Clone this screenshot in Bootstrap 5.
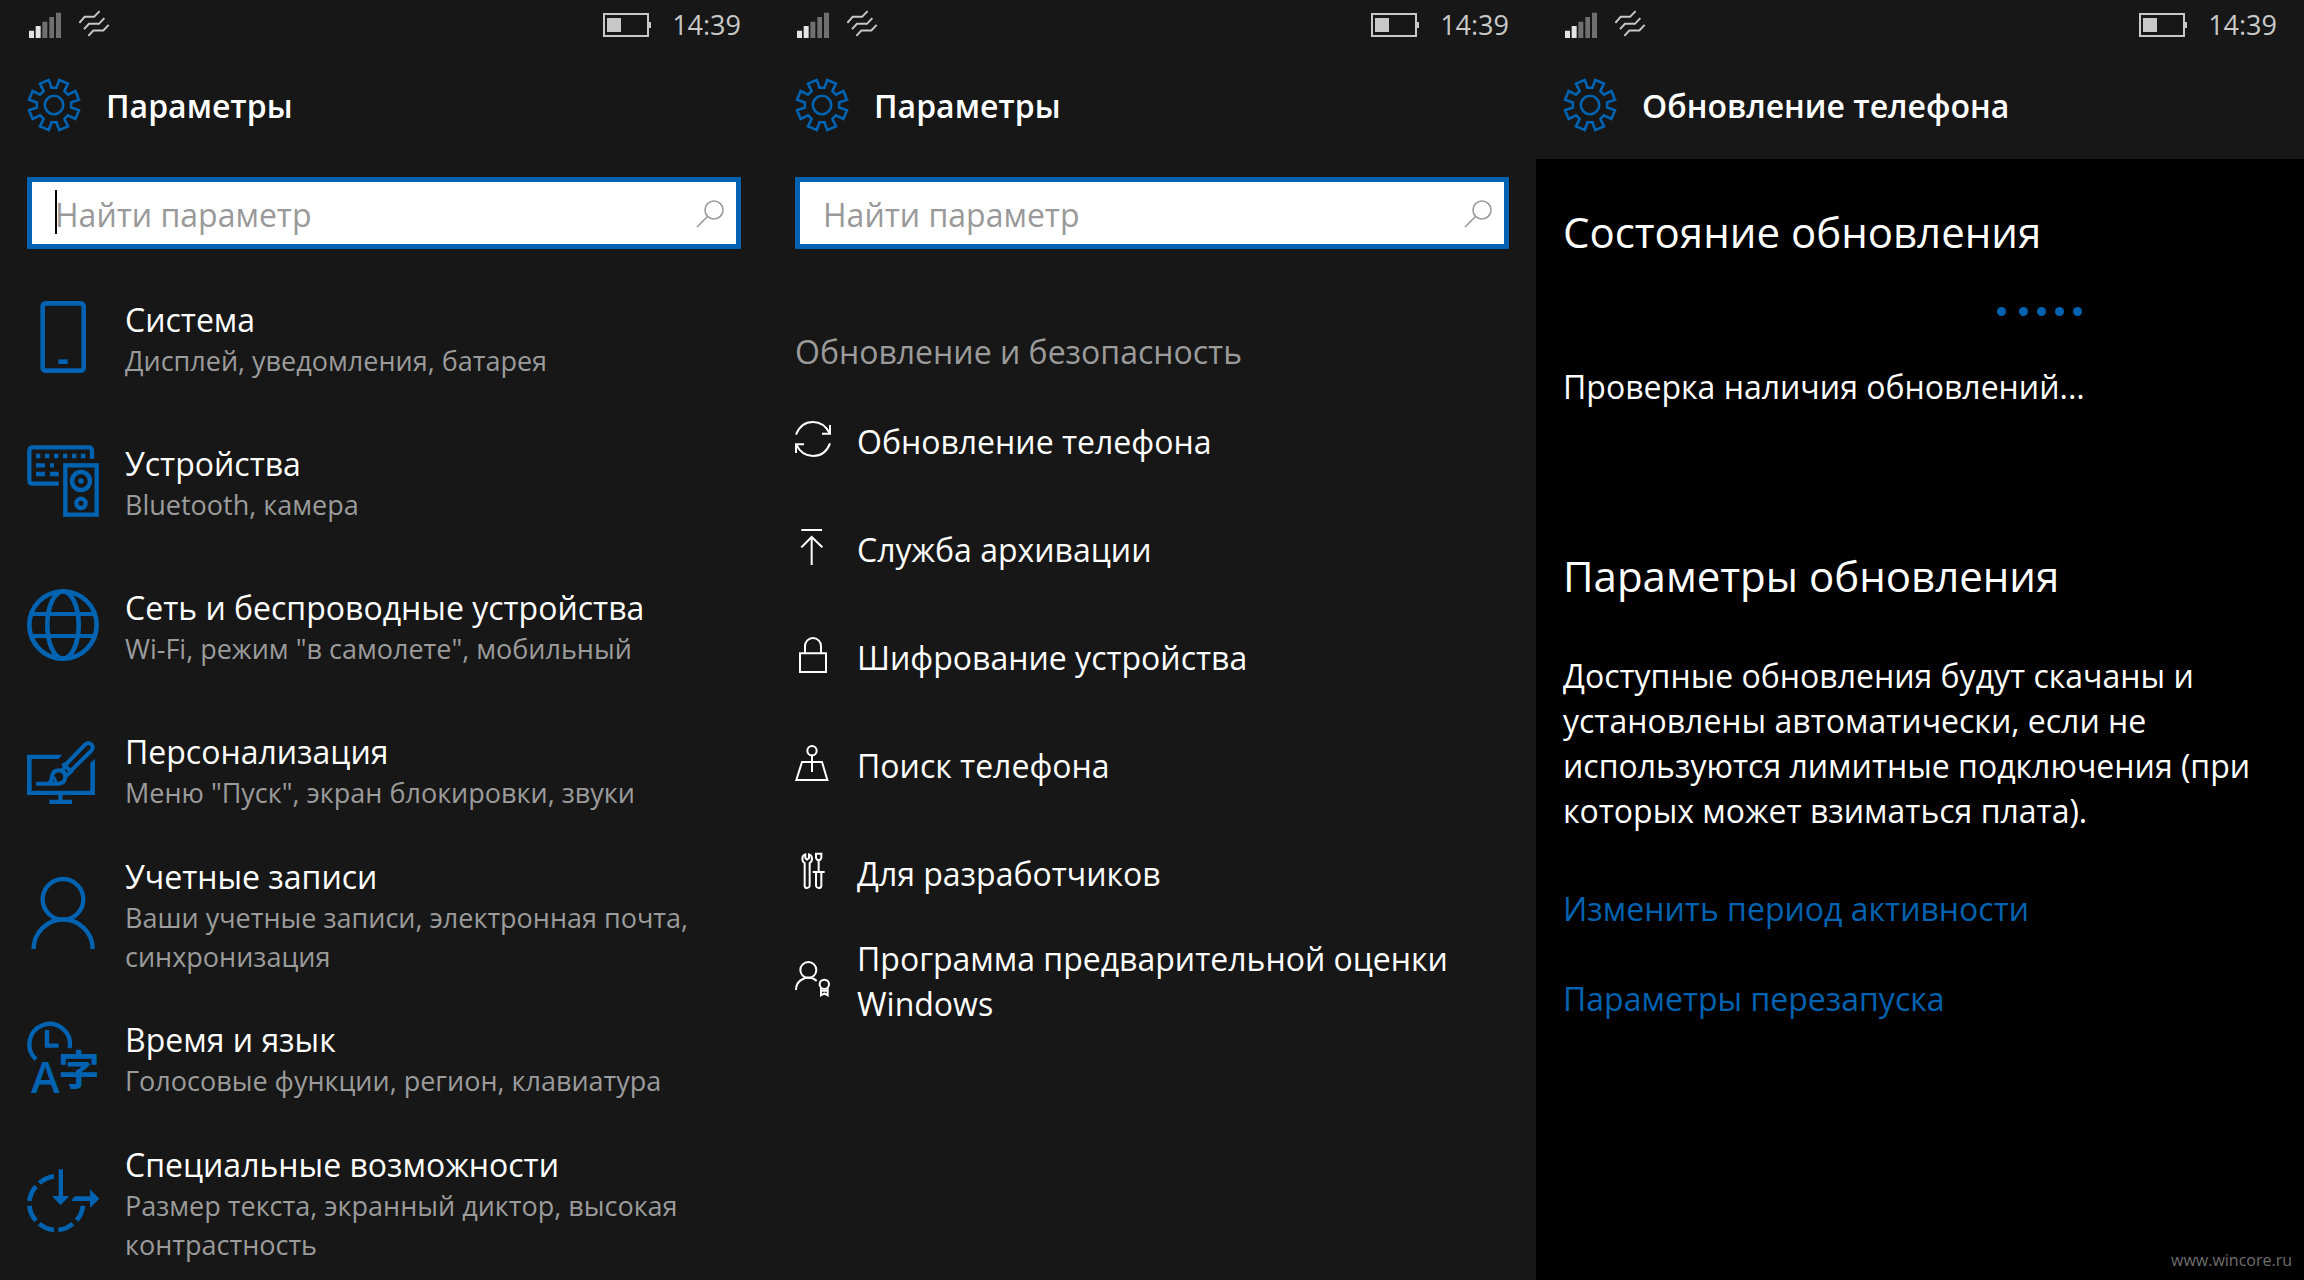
<!DOCTYPE html>
<html lang="ru">
<head>
<meta charset="utf-8">
<meta name="viewport" content="width=device-width, initial-scale=1">
<title>Параметры</title>
<link href="https://cdn.jsdelivr.net/npm/bootstrap@5.3.0/dist/css/bootstrap.min.css" rel="stylesheet">
<style>
:root { --accent: #0063b1; --chrome: #171717; --muted: #9b9b9b; --gutter: 27px; }
body { background: var(--chrome); color: #fff; font-family: "Open Sans", "Noto Sans", sans-serif; font-size: 32px; line-height: 45px; }
svg { display: block; flex: none; overflow: visible; }
a, a:hover { text-decoration: none; }
.phone { min-height: 100vh; }
.status-bar { height: 50px; padding: 0 var(--gutter); color: #c8c8c8; font-size: 27px; line-height: 50px; }
.status-icons { gap: 17px; padding-left: 2px; }
.status-info { gap: 20px; }
.app-title { height: 109px; padding: 0 var(--gutter); gap: 25px; }
.app-title h1 { font-size: 32px; line-height: 45px; font-weight: 600; margin: 0; padding-top: 2px; }
.accent { color: var(--accent); }
.search-box { height: 72px; margin: 18px var(--gutter) 0; border: 5px solid var(--accent); background: #fff; }
.search-box input { font-size: 32px; line-height: 45px; padding: 2px 0 0 23px; height: 62px; border: 0; outline: 0; background: transparent; color: #000; }
.search-box input::placeholder { color: #999; opacity: 1; }
.search-box button { width: 50px; height: 62px; padding: 2px 12px 0 10px; border: 0; background: none; color: #999; }
.caret { position: absolute; left: 23px; top: 8px; width: 2px; height: 44px; background: #000; }
.settings-list { margin-top: 16px; padding: 0 var(--gutter); }
.settings-item { min-height: 144px; gap: 26px; color: #fff; }
.settings-item .item-text { padding-top: 4px; }
.settings-item .name { line-height: 43px; }
.settings-item .hint { font-size: 27px; line-height: 39px; color: var(--muted); }
.group-title { margin: 80px var(--gutter) 0; font-size: 32px; line-height: 45px; font-weight: 400; color: var(--muted); }
.option-list { margin-top: 13px; padding: 0 var(--gutter); }
.option-item { min-height: 108px; gap: 26px; color: #fff; }
.option-item svg { margin-bottom: 4px; }
.update-body { background: #000; padding: 43px var(--gutter) 8px; }
.update-body h2 { font-size: 42px; line-height: 60px; font-weight: 400; margin: 0; }
.update-body p { margin: 0; }
.loader { gap: 9px; margin: 45px 0 48px; padding-left: 434px; }
.loader span { width: 9px; height: 9px; border-radius: 50%; background: var(--accent); }
.loader span:first-child { margin-right: 4px; }
.update-body .options-title { padding-top: 137px; }
.policy { padding-top: 47px; }
.links { gap: 45px; padding-top: 53px; }
.watermark { font-size: 16px; line-height: 24px; color: #6e6e6e; margin-right: -15px; }
</style>
</head>
<body>
<svg class="d-none" aria-hidden="true">
  <symbol id="signal" viewBox="27 36 96 78">
    <path fill="#e4e4e4" d="M27 92h15v22H27zM47 78h15v36H47z"/>
    <path fill="#6f6f6f" d="M67 65h15v49H67zM88 51h14v63H88zM108 38h15v76h-15z"/>
  </symbol>
  <symbol id="data" viewBox="174 28 96 80">
    <g fill="none" stroke="currentColor" stroke-width="6"><path d="M178 66l16-18h28l17-17M192 85l15-16h30l16-17M205 105l15-16h30l16-17"/></g>
  </symbol>
  <symbol id="battery" viewBox="0 0 49 24">
    <path fill="none" stroke="currentColor" stroke-width="2" d="M1 1h44v22H1z"/>
    <path fill="currentColor" d="M4 5h14v14H4zM46 9h2v6h-2z"/>
  </symbol>
  <symbol id="gear" viewBox="-27 -27 54 54">
    <g fill="none" stroke="currentColor" stroke-width="2.6">
      <path d="M-5.2-25L-2.5-17.2H2.5L5.2-25L14-21.35L10.4-13.9L13.9-10.4L21.35-14L25-5.2L17.2-2.5V2.5L25 5.2L21.35 14L13.9 10.4L10.4 13.9L14 21.35L5.2 25L2.5 17.2H-2.5L-5.2 25L-14 21.35L-10.4 13.9L-13.9 10.4L-21.35 14L-25 5.2L-17.2 2.5V-2.5L-25-5.2L-21.35-14L-13.9-10.4L-10.4-13.9L-14-21.35Z"/>
      <circle r="9.2"/>
    </g>
  </symbol>
  <symbol id="search" viewBox="0 0 28 28">
    <g fill="none" stroke="currentColor" stroke-width="1.6"><circle cx="18" cy="10" r="9"/><path d="M11.500 16.500L1 27"/></g>
  </symbol>
</svg>

<main class="container-fluid p-0">
  <div class="row g-0 row-cols-3">

    <section class="col phone d-flex flex-column">
      <div class="status-bar d-flex align-items-center justify-content-between">
        <div class="status-icons d-flex align-items-center">
          <svg width="32" height="26"><use href="#signal"/></svg>
          <svg class="mb-1" width="32" height="27"><use href="#data"/></svg>
        </div>
        <div class="status-info d-flex align-items-center"><svg width="49" height="24"><use href="#battery"/></svg><span>14:39</span></div>
      </div>
      <header class="app-title d-flex align-items-center">
        <svg class="accent" width="54" height="54"><use href="#gear"/></svg>
        <h1>Параметры</h1>
      </header>
      <form class="search-box d-flex align-items-center position-relative" role="search">
        <input class="flex-grow-1 w-100" type="text" placeholder="Найти параметр" aria-label="Найти параметр">
        <span class="caret"></span>
        <button type="button" aria-label="Найти"><svg width="28" height="28"><use href="#search"/></svg></button>
      </form>
      <nav class="settings-list d-flex flex-column">
        <a href="#" class="settings-item d-flex align-items-center">
          <svg class="accent" width="72" height="72" viewBox="81 63 216 216"><rect x="128" y="70" width="123" height="202" rx="9" fill="none" stroke="currentColor" stroke-width="14"/><path fill="currentColor" d="M175 238h28v14h-28z"/></svg>
          <div class="item-text"><div class="name">Система</div><div class="hint">Дисплей, уведомления, батарея</div></div>
        </a>
        <a href="#" class="settings-item d-flex align-items-center">
          <svg class="accent" width="72" height="72" viewBox="81 495 216 216">
            <g fill="none" stroke="currentColor" stroke-width="13">
              <path d="M176 611H98q-10 0-10-10V512q0-10 10-10H266q10 0 10 10V536"/>
              <path d="M108 528h13m14 0h13m14 0h13m14 0h13m14 0h13m14 0h13M108 556h27m15 0h12M108 582h27m15 0h26"/>
              <rect x="196" y="556" width="94" height="148"/><circle cx="243" cy="603" r="27"/><circle cx="243" cy="670" r="14"/>
            </g><circle cx="243" cy="603" r="8" fill="currentColor"/>
          </svg>
          <div class="item-text"><div class="name">Устройства</div><div class="hint">Bluetooth, камера</div></div>
        </a>
        <a href="#" class="settings-item d-flex align-items-center">
          <svg class="accent" width="72" height="72" viewBox="81 87 216 216"><g fill="none" stroke="currentColor" stroke-width="14"><circle cx="189" cy="195" r="101"/><ellipse cx="189" cy="195" rx="47" ry="101"/><path stroke-width="12" d="M94 162H284M94 228H284"/></g></svg>
          <div class="item-text"><div class="name">Сеть и беспроводные устройства</div><div class="hint">Wi-Fi, режим "в самолете", мобильный</div></div>
        </a>
        <a href="#" class="settings-item d-flex align-items-center">
          <svg class="accent" width="72" height="72" viewBox="81 522 216 216">
            <path fill="currentColor" d="M81 587H187L175 600H95V695H271V612L285 599V708H188V722H216V735H148V722H175V708H81Z"/>
            <g fill="none" stroke="currentColor" stroke-width="12">
              <path d="M190 624L254 558Q264 548 274 556Q283 566 273 576L207 641M188 613L217 642"/>
              <path d="M108 674H142Q154 672 155 656Q157 634 178 634Q196 637 196 655Q194 674 174 674H142"/>
              <path d="M158 658Q164 650 168 673" stroke-width="9"/>
            </g>
            <path fill="currentColor" d="M180 633l12-14 8 6-6 8 8 8 8-6 6 7-13 13z"/>
          </svg>
          <div class="item-text"><div class="name">Персонализация</div><div class="hint">Меню "Пуск", экран блокировки, звуки</div></div>
        </a>
        <a href="#" class="settings-item d-flex align-items-center">
          <svg class="accent" width="72" height="72" viewBox="81 81 216 216"><g fill="none" stroke="currentColor" stroke-width="13"><circle cx="189" cy="148" r="61"/><path d="M101 297A88 88 0 0 1 278 297"/></g></svg>
          <div class="item-text"><div class="name">Учетные записи</div><div class="hint">Ваши учетные записи, электронная почта, синхронизация</div></div>
        </a>
        <a href="#" class="settings-item d-flex align-items-center">
          <svg class="accent" width="72" height="72" viewBox="81 513 216 216">
            <g fill="none" stroke="currentColor" stroke-width="13"><path d="M108 628A61 61 0 1 1 209 594"/><path d="M141 540V587H176"/></g>
            <text x="93" y="729" font-family="Open Sans" font-weight="600" font-size="130" fill="currentColor">A</text>
            <text x="175" y="706" font-family="Noto Sans CJK JP" font-weight="700" font-size="124" fill="currentColor">字</text>
          </svg>
          <div class="item-text"><div class="name">Время и язык</div><div class="hint">Голосовые функции, регион, клавиатура</div></div>
        </a>
        <a href="#" class="settings-item d-flex align-items-center">
          <svg class="accent" width="72" height="72" viewBox="81 945 216 216">
            <path fill="none" stroke="currentColor" stroke-width="14" d="M162 979A81 81 0 0 0 118 999M108 1009A81 81 0 0 0 88 1053M88 1067A81 81 0 0 0 108 1112M118 1121A81 81 0 0 0 162 1140M175 1140A81 81 0 0 0 218 1121M230 1111A81 81 0 0 0 249 1067"/>
            <path fill="currentColor" d="M176 958h13v80h19l-26 28l-26-28h20zM215 1053q2-9 10-14h45v-21l28 28l-28 28v-21z"/>
          </svg>
          <div class="item-text"><div class="name">Специальные возможности</div><div class="hint">Размер текста, экранный диктор, высокая контрастность</div></div>
        </a>
      </nav>
    </section>

    <section class="col phone d-flex flex-column">
      <div class="status-bar d-flex align-items-center justify-content-between">
        <div class="status-icons d-flex align-items-center">
          <svg width="32" height="26"><use href="#signal"/></svg>
          <svg class="mb-1" width="32" height="27"><use href="#data"/></svg>
        </div>
        <div class="status-info d-flex align-items-center"><svg width="49" height="24"><use href="#battery"/></svg><span>14:39</span></div>
      </div>
      <header class="app-title d-flex align-items-center">
        <svg class="accent" width="54" height="54"><use href="#gear"/></svg>
        <h1>Параметры</h1>
      </header>
      <form class="search-box d-flex align-items-center" role="search">
        <input class="flex-grow-1 w-100" type="text" placeholder="Найти параметр" aria-label="Найти параметр">
        <button type="button" aria-label="Найти"><svg width="28" height="28"><use href="#search"/></svg></button>
      </form>
      <h2 class="group-title">Обновление и безопасность</h2>
      <nav class="option-list d-flex flex-column">
        <a href="#" class="option-item d-flex align-items-center">
          <svg width="36" height="36" viewBox="75 303 108 108"><path fill="none" stroke="currentColor" stroke-width="6" d="M78 344Q93 306 129 306Q162 306 179 340M180 315V341H156M78 399V373H102M79 374Q95 408 129 408Q166 408 180 370"/></svg>
          <span>Обновление телефона</span>
        </a>
        <a href="#" class="option-item d-flex align-items-center">
          <svg width="36" height="36" viewBox="75 627 108 108"><path fill="none" stroke="currentColor" stroke-width="6" d="M94 630H156M125 735V651M94 682L125 651L157 682"/></svg>
          <span>Служба архивации</span>
        </a>
        <a href="#" class="option-item d-flex align-items-center">
          <svg width="36" height="36" viewBox="75 951 108 108"><path fill="none" stroke="currentColor" stroke-width="6" d="M90 1000H168V1056H90ZM105 1000V978A24 24 0 0 1 153 978V1000"/></svg>
          <span>Шифрование устройства</span>
        </a>
        <a href="#" class="option-item d-flex align-items-center">
          <svg width="36" height="36" viewBox="15 15 108 108"><g fill="none" stroke="currentColor" stroke-width="6"><circle cx="66" cy="32" r="14"/><path d="M66 46V96M36 66H96L112 120H19Z"/></g></svg>
          <span>Поиск телефона</span>
        </a>
        <a href="#" class="option-item d-flex align-items-center">
          <svg width="36" height="36" viewBox="15 339 108 108"><g fill="none" stroke="currentColor" stroke-width="6"><path d="M46 343V354L51 359L57 354V343Q66 346 66 356Q66 365 59 369V438Q57 444 51 444Q45 444 44 438V369Q37 365 37 356Q37 346 46 343Z"/><path d="M78 341H94V354L90 360H82L78 354ZM86 360V396M68 396H104M78 396V438Q80 444 86 444Q93 444 94 438V396"/></g></svg>
          <span>Для разработчиков</span>
        </a>
        <a href="#" class="option-item d-flex align-items-center">
          <svg width="36" height="36" viewBox="15 660 108 108"><g fill="none" stroke="currentColor" stroke-width="6"><circle cx="55" cy="687" r="24"/><path d="M18 747A37 37 0 0 1 80 720"/><circle cx="103" cy="730" r="14"/><path d="M93 741V763L103 757L113 763V741M93 749H113"/></g></svg>
          <span>Программа предварительной оценки Windows</span>
        </a>
      </nav>
    </section>

    <section class="col phone d-flex flex-column">
      <div class="status-bar d-flex align-items-center justify-content-between">
        <div class="status-icons d-flex align-items-center">
          <svg width="32" height="26"><use href="#signal"/></svg>
          <svg class="mb-1" width="32" height="27"><use href="#data"/></svg>
        </div>
        <div class="status-info d-flex align-items-center"><svg width="49" height="24"><use href="#battery"/></svg><span>14:39</span></div>
      </div>
      <header class="app-title d-flex align-items-center">
        <svg class="accent" width="54" height="54"><use href="#gear"/></svg>
        <h1>Обновление телефона</h1>
      </header>
      <div class="update-body flex-grow-1 d-flex flex-column">
        <h2>Состояние обновления</h2>
        <div class="loader d-flex" role="status" aria-label="Проверка"><span></span><span></span><span></span><span></span><span></span></div>
        <p>Проверка наличия обновлений...</p>
        <h2 class="options-title">Параметры обновления</h2>
        <p class="policy">Доступные обновления будут скачаны и установлены автоматически, если не используются лимитные подключения (при которых может взиматься плата).</p>
        <div class="links d-flex flex-column align-items-start">
          <a class="accent" href="#">Изменить период активности</a>
          <a class="accent" href="#">Параметры перезапуска</a>
        </div>
        <div class="watermark mt-auto align-self-end">www.wincore.ru</div>
      </div>
    </section>

  </div>
</main>
<script src="https://cdn.jsdelivr.net/npm/bootstrap@5.3.0/dist/js/bootstrap.bundle.min.js"></script>
</body>
</html>
